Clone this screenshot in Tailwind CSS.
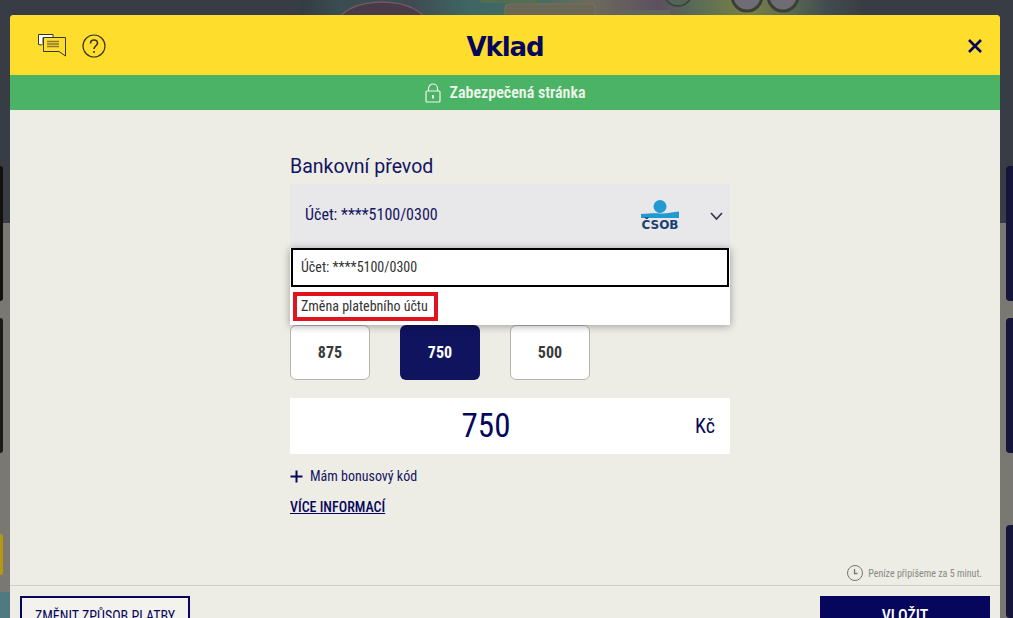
<!DOCTYPE html>
<html lang="cs">
<head>
  <meta charset="UTF-8">
  <title>Vklad</title>
  <script src="https://cdn.jsdelivr.net/npm/@tailwindcss/browser@4"></script>
</head>
<body class="relative h-[618px] w-[1013px] overflow-hidden bg-[#7a7872] font-['Roboto',sans-serif]">
  <!-- dimmed page behind the modal -->
  <div class="absolute inset-x-0 top-0 h-[223px] bg-[#383c44]"></div>
  <svg class="absolute left-[300px] top-0" width="560" height="15" viewBox="0 0 560 15">
    <defs>
      <linearGradient id="strip">
        <stop offset="0" stop-color="#333c42"/>
        <stop offset="0.07" stop-color="#3b4d52"/>
        <stop offset="0.2" stop-color="#3f4a52"/>
        <stop offset="0.3" stop-color="#3e6664"/>
        <stop offset="0.42" stop-color="#466a62"/>
        <stop offset="0.52" stop-color="#6d6a5c"/>
        <stop offset="0.64" stop-color="#5c5060"/>
        <stop offset="0.7" stop-color="#586a58"/>
        <stop offset="0.8" stop-color="#7a8044"/>
        <stop offset="0.87" stop-color="#5d6a54"/>
        <stop offset="0.94" stop-color="#424c50"/>
        <stop offset="1" stop-color="#3a3f46"/>
      </linearGradient>
    </defs>
    <rect width="560" height="15" fill="url(#strip)"/>
    <ellipse cx="82" cy="24" rx="44" ry="22" fill="#4a3b4b" stroke="#6f5a5e" stroke-width="1.5"/>
    <rect x="205" y="4" width="90" height="14" rx="4" fill="#6b6757" stroke="#767361"/>
    <rect x="180" y="-6" width="60" height="9" rx="3" fill="#546c52"/>
    <rect x="320" y="10" width="50" height="10" fill="#62645e"/>
    <circle cx="378" cy="-8" r="14" fill="#55645a" stroke="#3c4238" stroke-width="1.5"/>
    <circle cx="447" cy="-4" r="15" fill="#6f6c74" stroke="#3a3f38" stroke-width="3"/>
    <circle cx="483" cy="-4" r="15" fill="#6f6c74" stroke="#3a3f38" stroke-width="3"/>
  </svg>
  <div class="absolute left-[-4px] top-[166px] h-[135px] w-[7px] rounded-[3px] bg-[#14110d]"></div>
  <div class="absolute left-[-4px] top-[318px] h-[135px] w-[7px] rounded-[3px] bg-[#1a1a18]"></div>
  <div class="absolute left-[-4px] top-[534px] h-[41px] w-[7px] rounded-[3px] bg-[#b59a10]"></div>
  <div class="absolute left-0 top-[592px] h-[26px] w-[10px] bg-[#4f7a80]"></div>
  <div class="absolute left-[1006px] top-[166px] h-[135px] w-[12px] rounded-[4px] bg-[#15143a]"></div>
  <div class="absolute left-[1006px] top-[318px] h-[135px] w-[12px] rounded-[4px] bg-[#15143a]"></div>
  <div class="absolute left-[1006px] top-[525px] h-[93px] w-[12px] rounded-[4px] bg-[#15143a]"></div>

  <div class="absolute left-[10px] top-[15px] flex h-[603px] w-[990px] flex-col overflow-hidden rounded-t-[4px] bg-[#edece5]">
    <header class="relative flex h-[60px] shrink-0 items-center justify-center bg-[#ffdd2d]">
      <div class="absolute left-[28px] top-[19px] flex items-center gap-[16px]">
        <svg width="28" height="24" viewBox="0 0 28 24" fill="none" stroke="#3b3520" stroke-width="1">
          <path d="M0.5 0.5H15V3.5H5V9.5L3.5 11L0.5 10.5Z" fill="#fff"/>
          <path d="M5.5 3.5H27.5V22L21 17.5H5.5Z" fill="#ffdd2d"/>
          <path d="M9 7.5H21M9 10H21M9 12.5H21" stroke="#8a7a35" stroke-width="1.3"/>
        </svg>
        <svg width="24" height="24" viewBox="0 0 24 24" fill="none" stroke="#3b3520" stroke-width="1.2">
          <circle cx="12" cy="12" r="11"/>
          <path d="M8.5 9.5C8.5 7.3 10 6 12 6C14 6 15.5 7.3 15.5 9.2C15.5 11.6 12 12 12 15" stroke-width="1.6"/>
          <circle cx="12" cy="18" r="1" fill="#3b3520" stroke="none"/>
        </svg>
      </div>
      <h1 class="mt-[3px] font-['DejaVu_Sans',sans-serif] text-[26px] font-bold leading-none tracking-[-1.1px] text-[#06065c]">Vklad</h1>
      <svg class="absolute left-[958px] top-[24px]" width="14" height="14" viewBox="0 0 14 14" fill="none" stroke="#06065c" stroke-width="2.6">
        <path d="M1 1L13 13M13 1L1 13"/>
      </svg>
    </header>
    <div class="flex h-[35px] shrink-0 items-center justify-center gap-[9px] bg-[#4ab366]">
      <svg width="16" height="20" viewBox="0 0 16 20" fill="none" stroke="#f2f6ec" stroke-width="1.2">
        <rect x="1" y="8" width="14" height="11" rx="1"/>
        <path d="M3.5 8V5.5C3.5 3 5.5 1 8 1C10.5 1 12.5 3 12.5 5.5V8"/>
        <path d="M8 12V15.5" stroke-width="1.8"/>
      </svg>
      <span class="text-[16px] font-semibold leading-none text-[#eef5ea] [font-stretch:75%]">Zabezpečená stránka</span>
    </div>

    <main class="relative flex-1">
      <div class="relative ml-[280px] w-[440px] pt-[45px]">
        <h2 class="h-[29px] text-[19.5px] leading-[24px] text-[#14145f]">Bankovní převod</h2>
        <div class="flex h-[64px] items-center bg-[#e8e7e9] pl-[15px] pr-[5px] text-[#14145f]">
          <span class="mt-[-2px] flex-1 text-[16px] [font-stretch:75%]">Účet: ****5100/0300</span>
          <div class="mr-[30px] flex w-[40px] flex-col items-center">
            <svg width="40" height="18" viewBox="0 0 40 18">
              <circle cx="20" cy="6.5" r="6.5" fill="#2299cf"/>
              <path d="M1 18V14C8 14 14 13 20 13.5C26 14 32 12 39 11.5V18Z" fill="#2299cf"/>
            </svg>
            <span class="mt-[1px] font-['DejaVu_Sans',sans-serif] text-[12px] font-bold leading-[13px] tracking-[0px] text-[#1b3f73]">ČSOB</span>
          </div>
          <svg width="13" height="9" viewBox="0 0 13 9" fill="none" stroke="#3a3348" stroke-width="1.7" class="mr-[2px]">
            <path d="M1 1L6.5 7L12 1"/>
          </svg>
        </div>

        <div class="absolute left-0 top-[138px] z-10 w-[440px] bg-white shadow-[0_1px_8px_rgba(0,0,0,0.35)]">
          <div class="mx-[1px] flex h-[39px] items-center border-2 border-black pl-[8px] text-[14px] text-[#333] [font-stretch:75%]">Účet: ****5100/0300</div>
          <div class="flex h-[38px] items-start px-[3px] pt-[5px]">
            <span class="flex h-[29px] w-[145px] items-center border-[4px] border-[#e0141f] pl-[4px] text-[14px] text-[#333] [font-stretch:75%]">Změna platebního účtu</span>
          </div>
        </div>

        <div class="mt-[77px] flex gap-[30px]">
          <button class="h-[55px] w-[80px] rounded-[6px] border border-[#b5b4ae] bg-white pt-[1px] text-[16px] font-bold text-[#3a3a3a] [font-stretch:75%]">875</button>
          <button class="h-[55px] w-[80px] rounded-[6px] bg-[#10145f] pt-[1px] text-[16px] font-bold text-white [font-stretch:75%]">750</button>
          <button class="h-[55px] w-[80px] rounded-[6px] border border-[#b5b4ae] bg-white pt-[1px] text-[16px] font-bold text-[#3a3a3a] [font-stretch:75%]">500</button>
        </div>

        <div class="relative mt-[18px] flex h-[56px] items-center justify-center bg-white pr-[48px] text-[#06065c]">
          <span class="text-[33px] font-normal [font-stretch:75%]">750</span>
          <span class="absolute right-[15px] text-[20px] [font-stretch:75%]">Kč</span>
        </div>

        <div class="mt-[12px] flex h-[20px] items-center gap-[7px] text-[#14145f]">
          <svg width="13" height="13" viewBox="0 0 13 13" stroke="#06065c" stroke-width="2"><path d="M6.5 0.5V12.5M0.5 6.5H12.5"/></svg>
          <span class="text-[14px] [font-stretch:75%]">Mám bonusový kód</span>
        </div>
        <a class="mt-[11px] block text-[14px] font-medium leading-[20px] text-[#06065c] underline [font-stretch:75%]">VÍCE INFORMACÍ</a>
      </div>

      <div class="absolute right-[18px] top-[455px] flex items-center gap-[5px] text-[#8a8a84]">
        <svg width="16" height="16" viewBox="0 0 16 16" fill="none" stroke="#77776f" stroke-width="1">
          <circle cx="8" cy="8" r="7.5"/>
          <path d="M7.5 4V8.5H10.5" stroke-width="1.3"/>
        </svg>
        <span class="text-[10px] [font-stretch:75%]">Peníze připíšeme za 5 minut.</span>
      </div>
    </main>

    <footer class="absolute left-0 top-[570px] flex h-[33px] w-[990px] justify-between overflow-hidden border-t border-[#cfcec8] px-[10px] pt-[10px]">
      <button class="h-[40px] w-[170px] shrink-0 border-2 border-[#06065c] bg-[#f3f2ec] text-[14px] text-[#06065c] [font-stretch:75%]">ZMĚNIT ZPŮSOB PLATBY</button>
      <button class="h-[40px] w-[170px] shrink-0 bg-[#06065c] text-[16px] font-medium text-white [font-stretch:75%]">VLOŽIT</button>
    </footer>
  </div>
</body>
</html>
